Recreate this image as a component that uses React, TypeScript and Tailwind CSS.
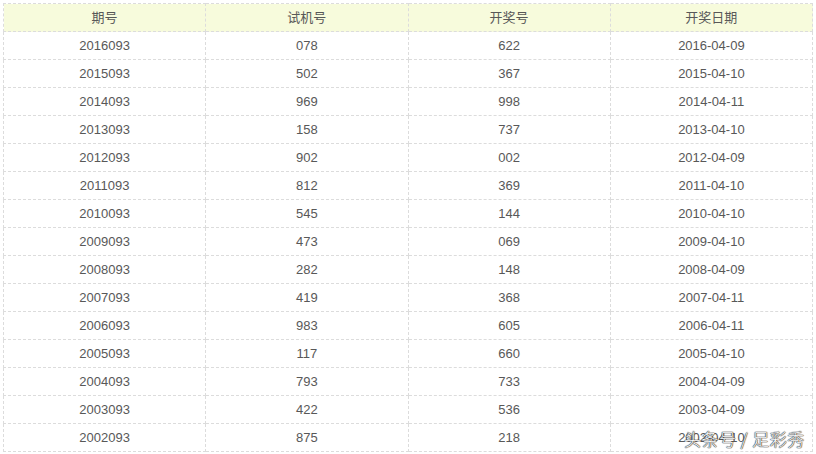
const rows = [
  ['2016093', '078', '622', '2016-04-09'],
  ['2015093', '502', '367', '2015-04-10'],
  ['2014093', '969', '998', '2014-04-11'],
  ['2013093', '158', '737', '2013-04-10'],
  ['2012093', '902', '002', '2012-04-09'],
  ['2011093', '812', '369', '2011-04-10'],
  ['2010093', '545', '144', '2010-04-10'],
  ['2009093', '473', '069', '2009-04-10'],
  ['2008093', '282', '148', '2008-04-09'],
  ['2007093', '419', '368', '2007-04-11'],
  ['2006093', '983', '605', '2006-04-11'],
  ['2005093', '117', '660', '2005-04-10'],
  ['2004093', '793', '733', '2004-04-09'],
  ['2003093', '422', '536', '2003-04-09'],
  ['2002093', '875', '218', '2002-04-10'],
]

const headers = ['期号', '试机号', '开奖号', '开奖日期']

export default function App() {
  return (
    <div className="relative w-[816px] h-[454px] bg-white pl-[3px] pt-[3px] font-['Liberation_Sans','Noto_Sans_CJK_SC',sans-serif] text-[13px] text-[#585858]">
      <table className="w-[810px] border-collapse table-fixed">
        <thead>
          <tr className="bg-[#f7fbdc] h-[28px]">
            {headers.map((h) => (
              <th key={h} className="border border-dashed border-[#dcdcdc] font-normal text-center p-0">
                {h}
              </th>
            ))}
          </tr>
        </thead>
        <tbody>
          {rows.map((r) => (
            <tr key={r[0]} className="h-[28px]">
              {r.map((c, i) => (
                <td key={i} className="border border-dashed border-[#dcdcdc] text-center p-0">
                  {c}
                </td>
              ))}
            </tr>
          ))}
        </tbody>
      </table>

      {/* watermark */}
      <div className="absolute left-[684px] top-[426px] text-[17px] font-light text-white font-['Noto_Sans_CJK_SC',sans-serif] [text-shadow:0_0_1px_#444,0_0_1px_#444,0_0_1px_#444,0_0_1px_#444] tracking-[0.5px]">
        头条号 / 足彩秀
      </div>
    </div>
  )
}
